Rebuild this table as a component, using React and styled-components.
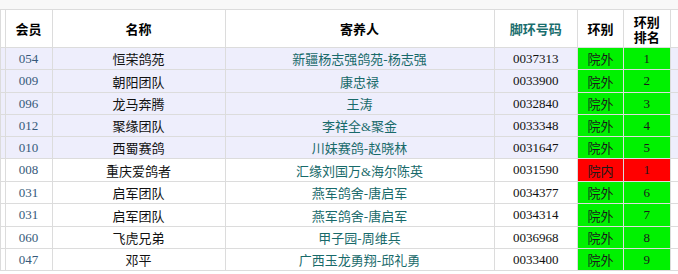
import React from "react";
import styled, { createGlobalStyle } from "styled-components";

const GlobalStyle = createGlobalStyle`
  body {
    margin: 0;
    background: #fff;
    font-family: "Liberation Serif", "Noto Sans CJK SC", serif;
    font-size: 13px;
  }
`;

const TopStrip = styled.div`
  height: 9px;
  background: #f8f8f8;
`;

const Table = styled.table`
  border-collapse: collapse;
  table-layout: fixed;
  width: 686px;
  margin: 0;

  td,
  th {
    border: 1px solid #dcdcdc;
    padding: 0;
    text-align: center;
    overflow: hidden;
    white-space: nowrap;
  }
`;

const Col = styled.col`
  width: ${(p) => p.$w}px;
`;

const HeadRow = styled.tr`
  height: 38px;
  background: #fff;

  th {
    font-weight: bold;
    color: #000;
    line-height: 15px;
    font-family: "Noto Sans CJK SC", sans-serif;
  }
`;

const HeadLink = styled.span`
  color: #1a6e6e;
`;

const Row = styled.tr`
  height: ${(p) => p.$h}px;
  background: ${(p) => (p.$shaded ? "#eeeefc" : "#fff")};
`;

const MemberCell = styled.td`
  color: #36597a;
`;

const NameCell = styled.td`
  color: #111;
`;

const SenderCell = styled.td`
  color: #186a6a;
`;

const RingCell = styled.td`
  color: #111;
`;

const StatusCell = styled.td`
  background: ${(p) => (p.$inside ? "#ff0000" : "#00f200")};
  color: #1a1a1a;
`;

const columns = [4.5, 47, 173, 269, 83.5, 46, 46.7];

const rowHeights = [22, 23, 22, 22, 22, 23, 22, 23, 22, 22];

const rows = [
  ["054", "恒荣鸽苑", "新疆杨志强鸽苑-杨志强", "0037313", "院外", 1],
  ["009", "朝阳团队", "康忠禄", "0033900", "院外", 2],
  ["096", "龙马奔腾", "王涛", "0032840", "院外", 3],
  ["012", "聚缘团队", "李祥全&聚金", "0033348", "院外", 4],
  ["010", "西蜀赛鸽", "川妹赛鸽-赵晓林", "0031647", "院外", 5],
  ["008", "重庆爱鸽者", "汇缘刘国万&海尔陈英", "0031590", "院内", 1],
  ["031", "启军团队", "燕军鸽舍-唐启军", "0034377", "院外", 6],
  ["031", "启军团队", "燕军鸽舍-唐启军", "0034314", "院外", 7],
  ["060", "飞虎兄弟", "甲子园-周维兵", "0036968", "院外", 8],
  ["047", "邓平", "广西玉龙勇翔-邱礼勇", "0033400", "院外", 9],
];

const App = () => {
  return (
    <>
      <GlobalStyle />
      <TopStrip />
      <Table>
        <colgroup>
          {columns.map((w, i) => (
            <Col key={i} $w={w} />
          ))}
          <col />
        </colgroup>
        <thead>
          <HeadRow>
            <th />
            <th>会员</th>
            <th>名称</th>
            <th>寄养人</th>
            <th>
              <HeadLink>脚环号码</HeadLink>
            </th>
            <th>环别</th>
            <th>
              环别
              <br />
              排名
            </th>
            <th />
          </HeadRow>
        </thead>
        <tbody>
          {rows.map(([member, name, sender, ring, status, rank], i) => (
            <Row key={i} $h={rowHeights[i]} $shaded={i < 5}>
              <td />
              <MemberCell>{member}</MemberCell>
              <NameCell>{name}</NameCell>
              <SenderCell>{sender}</SenderCell>
              <RingCell>{ring}</RingCell>
              <StatusCell $inside={status === "院内"}>{status}</StatusCell>
              <StatusCell $inside={status === "院内"}>{rank}</StatusCell>
              <td />
            </Row>
          ))}
        </tbody>
      </Table>
    </>
  );
};

export default App;
